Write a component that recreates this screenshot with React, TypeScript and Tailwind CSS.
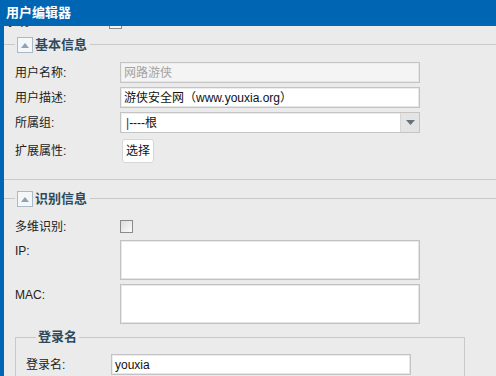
import React from "react";

const FONT = { fontFamily: '"Liberation Sans", "Noto Sans CJK SC", sans-serif' };

function Toggle() {
  return (
    <div className="w-[16px] h-[16px] shrink-0 border border-[#a9b9c6] bg-[#f4f6f8] flex items-center justify-center">
      <svg width="8" height="5" viewBox="0 0 8 5">
        <polygon points="4,0 8,5 0,5" fill="#8fa2b2" />
      </svg>
    </div>
  );
}

function Legend({ title }: { title: string }) {
  return (
    <div className="flex items-start h-[16px]">
      <div className="w-[11px] h-px mt-[7px] bg-[#c9c9c9]" />
      <div className="flex items-center ml-[2px]">
        <Toggle />
        <span className="ml-[2px] pr-[3px] text-[13px] font-bold leading-[16px] text-[#2e4a5e]">{title}</span>
      </div>
      <div className="flex-1 h-px mt-[7px] bg-[#c9c9c9]" />
    </div>
  );
}

const inputBox =
  "w-[300px] h-[21px] border border-[#c4c4c4] shadow-[inset_-1px_-1px_0_#e6e6e6,inset_1px_1px_0_#ededed] flex items-center pl-[3px] text-[12px] leading-[14px]";

function Row({ label, children, w = 105 }: { label: string; children: React.ReactNode; w?: number }) {
  return (
    <div className="flex items-center">
      <div className={`shrink-0 text-[12px] leading-[14px] text-[#222] ${w === 105 ? "w-[105px]" : "w-[85px]"}`}>{label}</div>
      {children}
    </div>
  );
}

function Checkbox() {
  return (
    <div className="w-[13px] h-[13px] border border-[#8a8a8a] bg-gradient-to-br from-[#dcdcdc] to-[#fbfbfb]" />
  );
}

export default function App() {
  return (
    <div className="w-[496px] h-[376px] overflow-hidden bg-[#0066b3] flex flex-col" style={FONT}>
      <div className="h-[26px] shrink-0 flex items-center pl-[6px] text-white font-bold text-[13px]">用户编辑器</div>
      <div className="flex-1 min-h-0 ml-[4px] bg-[#eaebea] overflow-hidden flex flex-col">
        {/* row cut off at the top */}
        <div className="h-[20px] -mt-[17px] shrink-0 flex items-end">
          <span className="pl-[1px] w-[105px] text-[12px] leading-[14px] text-[#222]">系统</span>
          <div className="w-[13px] h-[13px] border border-[#8a8a8a] bg-[#f4f4f4]" />
        </div>

        {/* 基本信息 */}
        <div className="mt-[8px] shrink-0 border-b border-[#c9c9c9]">
          <Legend title="基本信息" />
          <div className="pl-[11px] pt-[9px] pb-[16px] flex flex-col gap-[4px]">
            <Row label="用户名称:">
              <div className={`${inputBox} bg-[#f3f4f3] text-[#a3a3a3]`}>网路游侠</div>
            </Row>
            <Row label="用户描述:">
              <div className={`${inputBox} bg-white text-[#111]`}>游侠安全网（www.youxia.org）</div>
            </Row>
            <Row label="所属组:">
              <div className="w-[300px] h-[21px] border border-[#c4c4c4] bg-white flex text-[12px] leading-[14px]">
                <div className="flex-1 flex items-center pl-[5px] text-[#111] shadow-[inset_1px_1px_0_#ededed]">
                  <span className="text-[#3a2a78]">|</span>----根
                </div>
                <div className="w-[19px] border-l border-[#d6d6d6] bg-[#e3e4e3] flex items-center justify-center">
                  <svg width="9" height="5" viewBox="0 0 9 5">
                    <polygon points="0,0 9,0 4.5,5" fill="#66737c" />
                  </svg>
                </div>
              </div>
            </Row>
            <div className="mt-[2px]">
              <Row label="扩展属性:">
                <button className="ml-[2px] w-[32px] h-[24px] border border-[#d6d6d6] rounded-[3px] bg-white text-[12px] text-[#111] flex items-center justify-center">
                  选择
                </button>
              </Row>
            </div>
          </div>
        </div>

        {/* 识别信息 */}
        <div className="mt-[11px] shrink-0">
          <Legend title="识别信息" />
          <div className="pl-[11px] pt-[10px] flex flex-col gap-[4px]">
            <div className="flex items-center h-[19px]">
              <div className="w-[105px] text-[12px] leading-[14px] text-[#222]">多维识别:</div>
              <Checkbox />
            </div>
            <div className="flex items-start">
              <div className="w-[105px] pt-[4px] text-[12px] leading-[14px] text-[#222]">IP:</div>
              <div className="w-[300px] h-[40px] border border-[#c2c2c2] bg-white shadow-[inset_-1px_-1px_0_#e4e4e4,inset_1px_1px_0_#e9e9e9]" />
            </div>
            <div className="flex items-start">
              <div className="w-[105px] pt-[4px] text-[12px] leading-[14px] text-[#222]">MAC:</div>
              <div className="w-[300px] h-[40px] border border-[#c2c2c2] bg-white shadow-[inset_-1px_-1px_0_#e4e4e4,inset_1px_1px_0_#e9e9e9]" />
            </div>
          </div>

          {/* 登录名 */}
          <fieldset className="mt-[6px] ml-[11px] w-[450px] border border-[#c9c9c9] pl-[10px] pb-[20px]">
            <legend className="ml-[10px] px-[2px] text-[13px] font-bold leading-[14px] text-[#2e4a5e]">登录名</legend>
            <div className="pt-[10px]">
              <Row label="登录名:" w={85}>
                <div className={`${inputBox} bg-white text-[#111]`}>youxia</div>
              </Row>
            </div>
          </fieldset>
        </div>
      </div>
    </div>
  );
}
